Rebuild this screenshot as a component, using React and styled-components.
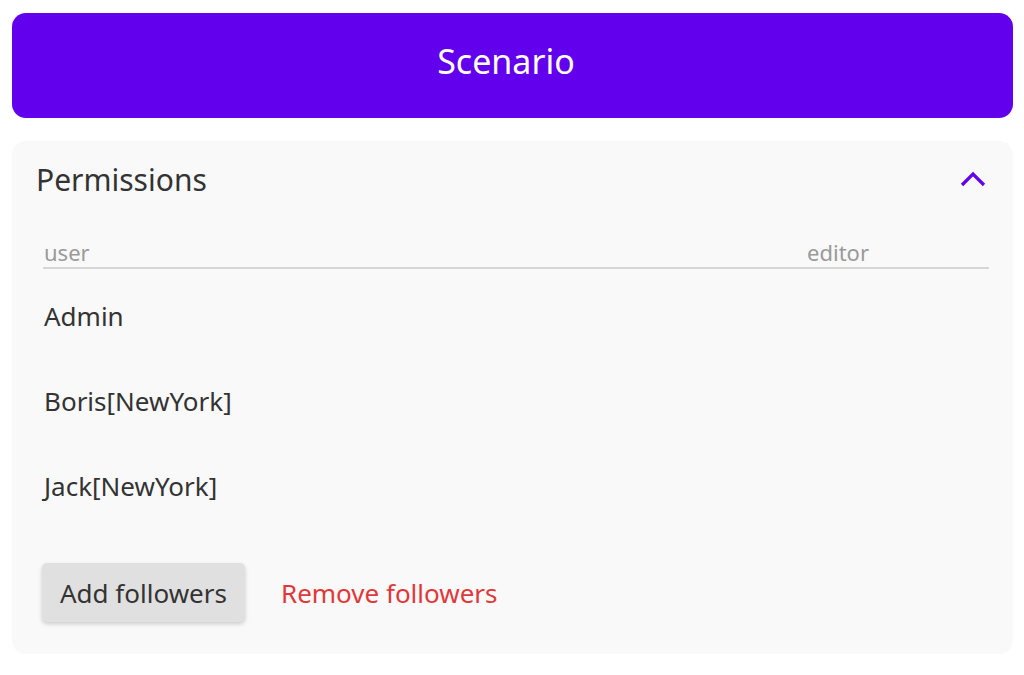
import React from "react";
import styled, { createGlobalStyle } from "styled-components";

const users = ["Admin", "Boris[NewYork]", "Jack[NewYork]"];

const GlobalStyle = createGlobalStyle`
  html, body {
    margin: 0;
    padding: 0;
    background: #ffffff;
    font-family: "Noto Sans", "Open Sans", sans-serif;
  }
`;

function App() {
  const [open, setOpen] = React.useState(true);

  return (
    <Page>
      <GlobalStyle />
      <TitleBar>Scenario</TitleBar>
      <Card>
        <CardHeader onClick={() => setOpen(!open)}>
          <CardTitle>Permissions</CardTitle>
          <Chevron viewBox="0 0 26 16" $open={open}>
            <path d="M2 14 L13 3 L24 14" />
          </Chevron>
        </CardHeader>
        {open && (
          <CardBody>
            <TableHead>
              <HeadCell>user</HeadCell>
              <HeadCell>editor</HeadCell>
            </TableHead>
            <UserList>
              {users.map((name) => (
                <UserRow key={name}>{name}</UserRow>
              ))}
            </UserList>
            <Actions>
              <AddButton>Add followers</AddButton>
              <TextButton>Remove followers</TextButton>
            </Actions>
          </CardBody>
        )}
      </Card>
    </Page>
  );
}

const Page = styled.div`
  display: flex;
  flex-direction: column;
  gap: 23px;
  padding: 13px 11px 0 12px;
`;

const TitleBar = styled.div`
  height: 105px;
  border-radius: 14px;
  background: #6200ee;
  color: #ffffff;
  display: flex;
  align-items: center;
  justify-content: center;
  font-size: 34px;
  padding: 0 13px 10px 0;
  box-sizing: border-box;
`;

const Card = styled.section`
  background: #f9f9f9;
  border-radius: 14px;
  padding: 0 24px 32px 24px;
`;

const CardHeader = styled.div`
  display: flex;
  align-items: center;
  justify-content: space-between;
  height: 76px;
  cursor: pointer;
`;

const CardTitle = styled.h2`
  margin: 0;
  font-weight: 400;
  font-size: 30px;
  color: #333333;
`;

const Chevron = styled.svg`
  width: 26px;
  height: 16px;
  margin-right: 3px;
  fill: none;
  stroke: #6200ee;
  stroke-width: 3.2;
  transform: rotate(${(p) => (p.$open ? 0 : 180)}deg);
`;

const CardBody = styled.div`
  padding: 0 0 0 7px;
`;

const TableHead = styled.div`
  display: flex;
  justify-content: space-between;
  align-items: flex-end;
  height: 52px;
  border-bottom: 2px solid #d6d6d6;
  padding: 0 120px 0 1px;
  box-sizing: border-box;
`;

const HeadCell = styled.span`
  font-size: 22px;
  color: #9a9a9a;
  line-height: 30px;
`;

const UserList = styled.div`
  display: flex;
  flex-direction: column;
  padding-top: 4px;
`;

const UserRow = styled.div`
  height: 85px;
  display: flex;
  align-items: center;
  font-size: 26px;
  color: #333333;
  padding-left: 1px;
`;

const Actions = styled.div`
  display: flex;
  align-items: center;
  gap: 36px;
  margin-top: 35px;
`;

const AddButton = styled.button`
  height: 59px;
  padding: 0 18px;
  border: none;
  border-radius: 5px;
  background: #e0e0e0;
  color: #333333;
  font-family: inherit;
  font-size: 26px;
  box-shadow: 0 2px 4px rgba(0, 0, 0, 0.18);
  margin-left: -1px;
`;

const TextButton = styled.button`
  border: none;
  background: none;
  padding: 0;
  color: #e0383a;
  font-family: inherit;
  font-size: 26px;
`;

export default App;
